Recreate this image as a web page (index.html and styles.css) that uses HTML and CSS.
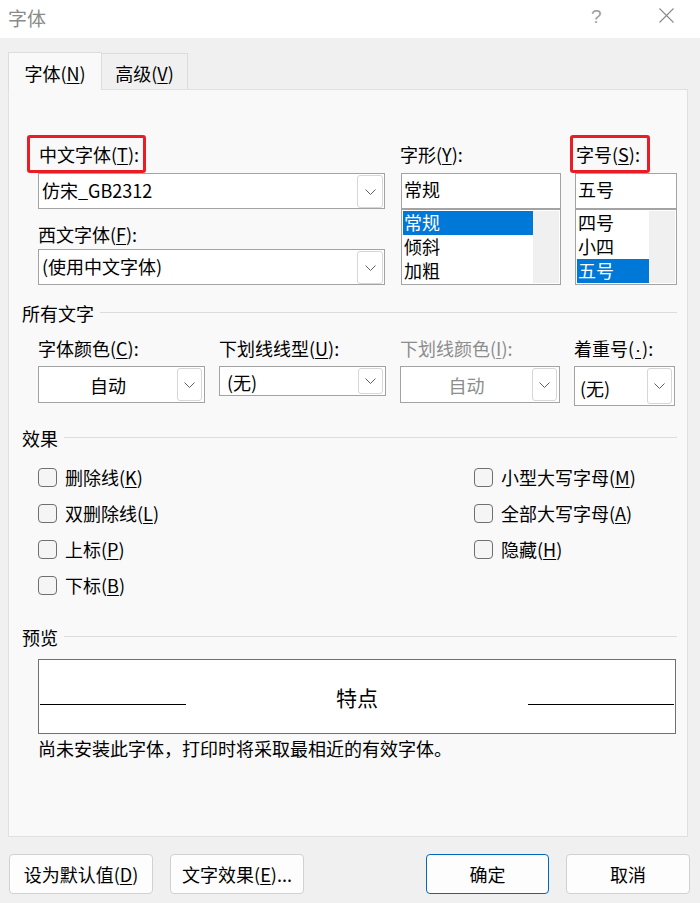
FILE: index.html
```html
<!DOCTYPE html>
<html lang="zh-CN">
<head>
<meta charset="utf-8">
<title>字体</title>
<link rel="stylesheet" href="styles.css">
</head>
<body>
<div class="win">
  <div class="titlebar">
    <span class="title">字体</span>
    <span class="help">?</span>
    <svg class="close" width="15" height="15" viewBox="0 0 15 15"><path d="M0.5 0.5L14.5 14.5M14.5 0.5L0.5 14.5" stroke="#8a8a8a" stroke-width="1.1" fill="none"/></svg>
  </div>

  <div class="tabs">
    <div class="tab active">字体(<u>N</u>)</div>
    <div class="tab second">高级(<u>V</u>)</div>
  </div>

  <div class="panel">
    <div class="fontrow">
      <div class="col c1">
        <div class="lblrow"><span class="lbl red red1">中文字体(<u>T</u>):</span></div>
        <div class="combo big">
          <span class="val">仿宋_GB2312</span>
          <span class="dd"><svg width="11" height="6" viewBox="0 0 11 6"><path d="M0.5 0.5L5.5 5.5L10.5 0.5" stroke="#5f5f5f" stroke-width="1" fill="none"/></svg></span>
        </div>
        <div class="lbl2">西文字体(<u>F</u>):</div>
        <div class="combo big">
          <span class="val">(使用中文字体)</span>
          <span class="dd"><svg width="11" height="6" viewBox="0 0 11 6"><path d="M0.5 0.5L5.5 5.5L10.5 0.5" stroke="#5f5f5f" stroke-width="1" fill="none"/></svg></span>
        </div>
      </div>
      <div class="col c2">
        <div class="lblrow"><span class="lbl">字形(<u>Y</u>):</span></div>
        <div class="tbox">常规</div>
        <div class="list">
          <div class="items"><div class="it sel">常规</div><div class="it">倾斜</div><div class="it">加粗</div></div>
          <div class="track"></div>
        </div>
      </div>
      <div class="col c3">
        <div class="lblrow"><span class="lbl red red3">字号(<u>S</u>):</span></div>
        <div class="tbox">五号</div>
        <div class="list">
          <div class="items"><div class="it">四号</div><div class="it">小四</div><div class="it sel">五号</div></div>
          <div class="track"></div>
        </div>
      </div>
    </div>

    <div class="sect s1">所有文字</div>
    <div class="attrs">
      <div class="field">
        <div class="flbl">字体颜色(<u>C</u>):</div>
        <div class="combo a1">
          <span class="val center">自动</span>
          <span class="dd"><svg width="11" height="6" viewBox="0 0 11 6"><path d="M0.5 0.5L5.5 5.5L10.5 0.5" stroke="#5f5f5f" stroke-width="1" fill="none"/></svg></span>
        </div>
      </div>
      <div class="field">
        <div class="flbl">下划线线型(<u>U</u>):</div>
        <div class="combo a2">
          <span class="val">(无)</span>
          <span class="dd"><svg width="11" height="6" viewBox="0 0 11 6"><path d="M0.5 0.5L5.5 5.5L10.5 0.5" stroke="#5f5f5f" stroke-width="1" fill="none"/></svg></span>
        </div>
      </div>
      <div class="field disabled">
        <div class="flbl">下划线颜色(<u>I</u>):</div>
        <div class="combo a3">
          <span class="val center">自动</span>
          <span class="dd"><svg width="11" height="6" viewBox="0 0 11 6"><path d="M0.5 0.5L5.5 5.5L10.5 0.5" stroke="#5f5f5f" stroke-width="1" fill="none"/></svg></span>
        </div>
      </div>
      <div class="field">
        <div class="flbl">着重号(<u class="dot">·</u>):</div>
        <div class="combo a4">
          <span class="val">(无)</span>
          <span class="dd"><svg width="11" height="6" viewBox="0 0 11 6"><path d="M0.5 0.5L5.5 5.5L10.5 0.5" stroke="#5f5f5f" stroke-width="1" fill="none"/></svg></span>
        </div>
      </div>
    </div>

    <div class="sect s2">效果</div>
    <div class="effects">
      <div class="cb"><span class="box"></span>删除线(<u>K</u>)</div>
      <div class="cb"><span class="box"></span>双删除线(<u>L</u>)</div>
      <div class="cb"><span class="box"></span>上标(<u>P</u>)</div>
      <div class="cb"><span class="box"></span>下标(<u>B</u>)</div>
      <div class="cb"><span class="box"></span>小型大写字母(<u>M</u>)</div>
      <div class="cb"><span class="box"></span>全部大写字母(<u>A</u>)</div>
      <div class="cb"><span class="box"></span>隐藏(<u>H</u>)</div>
    </div>

    <div class="sect s3">预览</div>
    <div class="preview">
      <span class="pline"></span>
      <span class="ptext">特点</span>
      <span class="pline"></span>
    </div>
    <div class="note">尚未安装此字体，打印时将采取最相近的有效字体。</div>
  </div>

  <div class="footer">
    <div class="btn b1">设为默认值(<u>D</u>)</div>
    <div class="btn b2">文字效果(<u>E</u>)...</div>
    <div class="btn b3 primary">确定</div>
    <div class="btn b4">取消</div>
  </div>
</div>
</body>
</html>
```

FILE: styles.css
```css
html, body {
  margin: 0;
  padding: 0;
}
body {
  background: #f0f0f0;
  font-family: "Noto Sans CJK SC", "Noto Sans", sans-serif;
  font-size: 18px;
  color: #000;
}
u {
  text-decoration: underline;
  text-underline-offset: 2px;
  text-decoration-thickness: 1px;
}
u.dot {
  font-family: "Liberation Sans", sans-serif;
  padding: 0 1px;
}
.win {
  width: 700px;
  height: 903px;
  overflow: hidden;
}

/* title bar */
.titlebar {
  height: 38px;
  background: #fff;
  display: flex;
  align-items: center;
}
.title {
  margin-left: 8px;
  margin-top: -3px;
  font-size: 19px;
  line-height: 24px;
  color: #8b8b8b;
}
.help {
  margin-left: auto;
  width: 9px;
  margin-top: -4px;
  font-family: "Liberation Sans", sans-serif;
  font-size: 19px;
  line-height: 22px;
  color: #9c9c9c;
}
.close {
  margin-left: 59px;
  margin-right: 26px;
  margin-top: -7px;
}

/* tabs */
.tabs {
  display: flex;
  align-items: flex-end;
  height: 37px;
  margin-top: 14px;
  padding-left: 8px;
  position: relative;
  z-index: 1;
}
.tab {
  box-sizing: border-box;
  height: 36px;
  border: 1px solid #dcdcdc;
  border-bottom: none;
  background: #f0f0f0;
  text-align: center;
  padding-top: 6px;
  line-height: 26px;
}
.tab.active {
  width: 94px;
  height: 38px;
  margin-bottom: -1px;
  padding-top: 7px;
  background: #f9f9f9;
}
.tab.second {
  width: 87px;
  margin-left: -1px;
}

/* panel */
.panel {
  box-sizing: border-box;
  margin-left: 8px;
  width: 680px;
  height: 748px;
  border: 1px solid #e0e0e0;
  background: #f9f9f9;
}

.fontrow {
  display: flex;
  margin-left: 29px;
  padding-top: 45px;
}
.c1 { width: 347px; }
.c2 { width: 160px; margin-left: 16px; }
.c3 { width: 102px; margin-left: 14px; }

.lblrow {
  height: 38px;
  white-space: nowrap;
}
.lbl {
  display: inline-block;
  box-sizing: border-box;
  height: 38px;
  border: 3px solid transparent;
  border-radius: 3px;
  line-height: 32px;
  padding: 0 1px 0 0;
  margin-left: -4px;
}
.lbl.red {
  border-color: #ec1c24;
}
.red1 {
  margin-left: -11px;
  padding-left: 9px;
  padding-right: 4px;
}
.red3 {
  margin-left: -5px;
  padding-left: 3px;
  padding-right: 7px;
}
.lbl2 {
  height: 40px;
  box-sizing: border-box;
  padding-top: 13px;
  line-height: 24px;
}

/* combo boxes */
.combo {
  box-sizing: border-box;
  display: flex;
  border: 1px solid #a3a3a3;
  background: #fff;
}
.combo .val {
  flex: 1;
  display: flex;
  align-items: center;
  padding-left: 3px;
  white-space: nowrap;
}
.combo .val.center {
  justify-content: center;
  padding-left: 0;
}
.dd {
  box-sizing: border-box;
  width: 26px;
  border: 1px solid #d6d6d6;
  border-radius: 3px;
  background: #fff;
  display: flex;
  align-items: center;
  justify-content: center;
}
.combo.big {
  height: 36px;
  padding: 1px 1px 0 0;
}
.combo.big .val {
  padding-bottom: 4px;
}

.tbox {
  box-sizing: border-box;
  height: 36px;
  border: 1px solid #a3a3a3;
  background: #fff;
  padding-left: 2px;
  line-height: 31px;
}
.list {
  box-sizing: border-box;
  display: flex;
  height: 76px;
  border: 1px solid #a3a3a3;
  background: #fff;
  padding: 1px;
}
.items {
  flex: 1;
}
.it {
  height: 24px;
  line-height: 23px;
  padding-left: 1px;
}
.it.sel {
  background: #0078d7;
  color: #fff;
}
.track {
  width: 26px;
  background: #f0f0f0;
}

/* section headers */
.sect {
  display: flex;
  align-items: center;
  height: 24px;
  line-height: 24px;
  margin-left: 13px;
  margin-right: 10px;
}
.sect::after {
  content: "";
  flex: 1;
  height: 1px;
  background: #dcdcdc;
  margin-left: 6px;
  margin-top: -1px;
}
.s1 { margin-top: 16px; }
.s2 { margin-top: 20px; }
.s3 { margin-top: 22px; }

/* all text attributes */
.attrs {
  display: grid;
  grid-template-columns: 167px 167px 160px 101px;
  column-gap: 14px;
  align-items: start;
  margin-left: 29px;
  margin-top: 11px;
}
.flbl {
  line-height: 24px;
  height: 24px;
  margin-bottom: 6px;
  white-space: nowrap;
}
.disabled .flbl,
.disabled .val {
  color: #8d8d8d;
}
.combo.a1, .combo.a2, .combo.a3, .combo.a4 {
  padding: 1px 2px 1px 0;
}
.combo.a1 { height: 37px; }
.combo.a2 { height: 30px; }
.combo.a3 { height: 37px; }
.combo.a4 { height: 40px; }
.a2 .val { padding-left: 7px; padding-top: 2px; }
.a4 .val { padding-left: 5px; padding-top: 3px; }
.a1 .dd, .a2 .dd, .a3 .dd, .a4 .dd { width: 25px; }

/* effects */
.effects {
  display: grid;
  grid-template-columns: 436px auto;
  grid-template-rows: repeat(4, 36px);
  grid-auto-flow: column;
  margin-left: 29px;
  margin-top: 9px;
}
.cb {
  display: flex;
  align-items: center;
  white-space: nowrap;
}
.box {
  box-sizing: border-box;
  width: 19px;
  height: 19px;
  border: 1px solid #6f6f6f;
  border-radius: 4px;
  background: #f5f5f5;
  margin-right: 8px;
}

/* preview */
.preview {
  box-sizing: border-box;
  margin: 10px 0 0 29px;
  width: 638px;
  height: 75px;
  border: 1px solid #707070;
  background: #fff;
  display: flex;
  align-items: center;
  justify-content: space-between;
  padding: 0 1px;
}
.pline {
  width: 146px;
  height: 17px;
  box-sizing: border-box;
  border-bottom: 1px solid #000;
}
.ptext {
  font-size: 21px;
  line-height: 28px;
}
.note {
  margin: 2px 0 0 29px;
  line-height: 24px;
}

/* footer */
.footer {
  display: flex;
  margin-top: 17px;
  padding-left: 9px;
  padding-right: 10px;
}
.btn {
  box-sizing: border-box;
  height: 40px;
  border: 1px solid #d1d1d1;
  border-radius: 4px;
  background: #fdfdfd;
  display: flex;
  align-items: center;
  justify-content: center;
  white-space: nowrap;
}
.b1 { width: 144px; }
.b2 { width: 134px; margin-left: 17px; }
.b3 { width: 123px; margin-left: auto; }
.b4 { width: 124px; margin-left: 17px; }
.btn.primary {
  border-color: #0067c0;
}
```
